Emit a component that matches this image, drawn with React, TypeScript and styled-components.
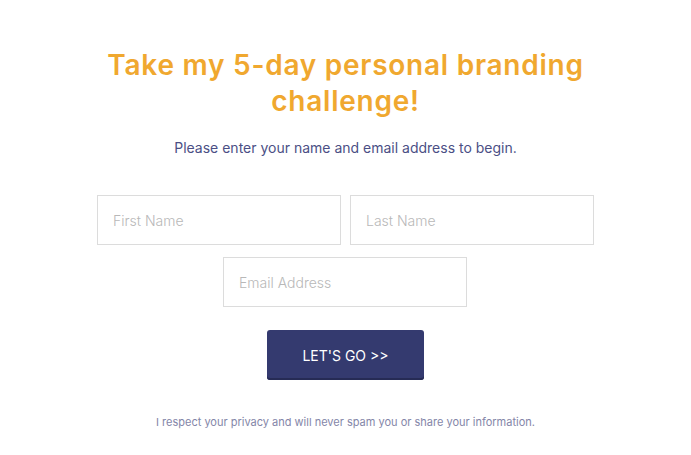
import React from "react";
import styled, { createGlobalStyle } from "styled-components";

const Global = createGlobalStyle`
  html, body { margin: 0; padding: 0; background: #ffffff; }
  body { font-family: Inter, "Open Sans", sans-serif; }
  * { box-sizing: border-box; }
`;

const Page = styled.div`
  width: 691px;
  height: 455px;
  display: flex;
  flex-direction: column;
  align-items: center;
  padding-top: 47px;
`;

const Title = styled.h1`
  margin: 0;
  width: 560px;
  text-align: center;
  font-family: Inter, sans-serif;
  font-weight: 600;
  font-size: 28px;
  line-height: 36px;
  letter-spacing: 0.75px;
  color: #f0a82f;
`;

const Subtitle = styled.p`
  margin: 20px 0 0;
  font-family: Inter, sans-serif;
  font-weight: 400;
  font-size: 14px;
  line-height: 18px;
  color: #4b4f85;
`;

const Form = styled.form`
  margin-top: 38px;
  width: 497px;
  display: flex;
  flex-direction: column;
  align-items: center;
  gap: 12px;
`;

const Row = styled.div<{ $shift?: boolean }>`
  display: flex;
  gap: 9px;
  width: 100%;
  justify-content: center;
  padding-right: ${(p) => (p.$shift ? "1px" : "0")};
`;

const Input = styled.input`
  width: 244px;
  height: 50px;
  border: 1px solid #dcdcdc;
  border-radius: 0;
  padding: 0 15px;
  font-family: Inter, sans-serif;
  font-weight: 300;
  font-size: 14px;
  color: #333;
  outline: none;
  &::placeholder { color: #b8b8b8; }
`;

const Button = styled.button`
  margin-top: 11px;
  width: 157px;
  height: 50px;
  border: none;
  border-radius: 3px;
  background: #343a6f;
  box-shadow: inset 0 -2px 0 #262b55;
  color: #ffffff;
  font-family: Inter, sans-serif;
  font-size: 14px;
  cursor: pointer;
`;

const Privacy = styled.p`
  margin: 35px 0 0;
  font-family: Inter, sans-serif;
  font-size: 11px;
  color: #8486a8;
`;

export default function App() {
  return (
    <>
      <Global />
      <Page>
        <Title>Take my 5-day personal branding challenge!</Title>
        <Subtitle>Please enter your name and email address to begin.</Subtitle>
        <Form onSubmit={(e) => e.preventDefault()}>
          <Row>
            <Input placeholder="First Name" />
            <Input placeholder="Last Name" />
          </Row>
          <Row $shift>
            <Input placeholder="Email Address" />
          </Row>
          <Button type="submit">LET'S GO &gt;&gt;</Button>
        </Form>
        <Privacy>I respect your privacy and will never spam you or share your information.</Privacy>
      </Page>
    </>
  );
}
